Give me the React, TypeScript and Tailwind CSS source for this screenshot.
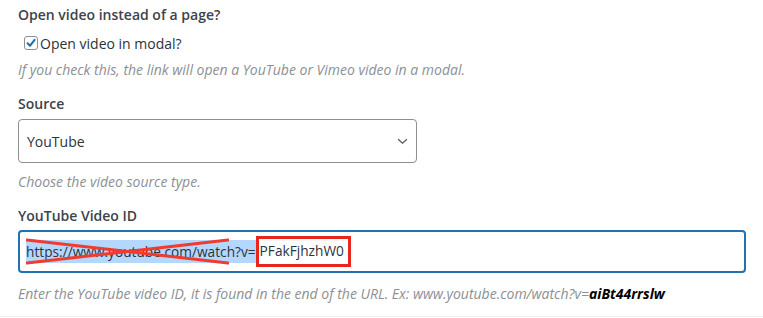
import React from 'react';

// Einstellungsformular: Video statt Seite öffnen
const Help = ({ children }: { children: React.ReactNode }) => (
  <p className="h-5 text-[14px] leading-5 italic text-[#8c8f94]">{children}</p>
);

const Label = ({ children, className = '' }: { children: React.ReactNode; className?: string }) => (
  <div className={`h-5 text-[14px] leading-5 font-semibold text-[#3c434a] ${className}`}>{children}</div>
);

const App: React.FC = () => {
  return (
    <div
      className="w-[763px] h-[318px] bg-white overflow-hidden"
      style={{ fontFamily: '"Open Sans", "Liberation Sans", sans-serif' }}
    >
      <div className="pl-[18px] pt-[5px]">
        <Label>Open video instead of a page?</Label>

        <label className="mt-[8px] ml-[6px] flex items-center h-5 text-[14px] text-[#2c3338]">
          <span className="w-[14px] h-[14px] border border-[#8c8f94] rounded-[3px] flex items-center justify-center bg-white">
            <svg viewBox="0 0 14 14" className="w-[14px] h-[14px]">
              <path d="M3 7.4 L5.8 10.2 L11.2 3.4" fill="none" stroke="#2271b1" strokeWidth="2.4" strokeLinecap="round" strokeLinejoin="round" />
            </svg>
          </span>
          <span className="ml-[2px]">Open video in modal?</span>
        </label>

        <div className="mt-[7px]">
          <Help>If you check this, the link will open a YouTube or Vimeo video in a modal.</Help>
        </div>

        <Label className="mt-[14px]">Source</Label>

        <div className="mt-[5px] w-[399px] h-[44px] border border-[#8c8f94] rounded-[4px] flex items-center justify-between pl-[8px] pr-[8px] text-[14px] text-[#2c3338]">
          <span>YouTube</span>
          <svg viewBox="0 0 12 8" className="w-[11px] h-[7px]">
            <path d="M1 1.5 L6 6 L11 1.5" fill="none" stroke="#50575e" strokeWidth="1.4" />
          </svg>
        </div>

        <div className="mt-[9px]">
          <Help>Choose the video source type.</Help>
        </div>

        <Label className="mt-[14px]">YouTube Video ID</Label>

        <div className="mt-[4px] w-[728px] h-[43px] border-2 border-[#2271b1] rounded-[4px] flex items-center pl-[6px] text-[13.7px] text-[#2c3338]">
          <span className="relative bg-[#b3d7fd] h-[23px] leading-[23px] flex items-center">
            https://www.youtube.com/watch?v=
            <svg className="absolute left-0 top-[-2px] w-[203px] h-[27px]" viewBox="0 0 203 27">
              <path d="M1 2 L202 25" stroke="#f23a2f" strokeWidth="3" strokeLinecap="round" fill="none" />
              <path d="M1 25 L202 2" stroke="#f23a2f" strokeWidth="3" strokeLinecap="round" fill="none" />
            </svg>
          </span>
          <span className="h-[31px] border-[3px] border-[#e8261c] flex items-center pl-[1px] pr-[4px]">PFakFjhzhW0</span>
        </div>

        <div className="mt-[11px]">
          <Help>
            Enter the YouTube video ID, it is found in the end of the URL. Ex: www.youtube.com/watch?v=
            <b className="font-bold text-black">aiBt44rrslw</b>
          </Help>
        </div>
      </div>
      <div className="mt-[12px] border-t border-[#f0f0f1]" />
    </div>
  );
};

export default App;
